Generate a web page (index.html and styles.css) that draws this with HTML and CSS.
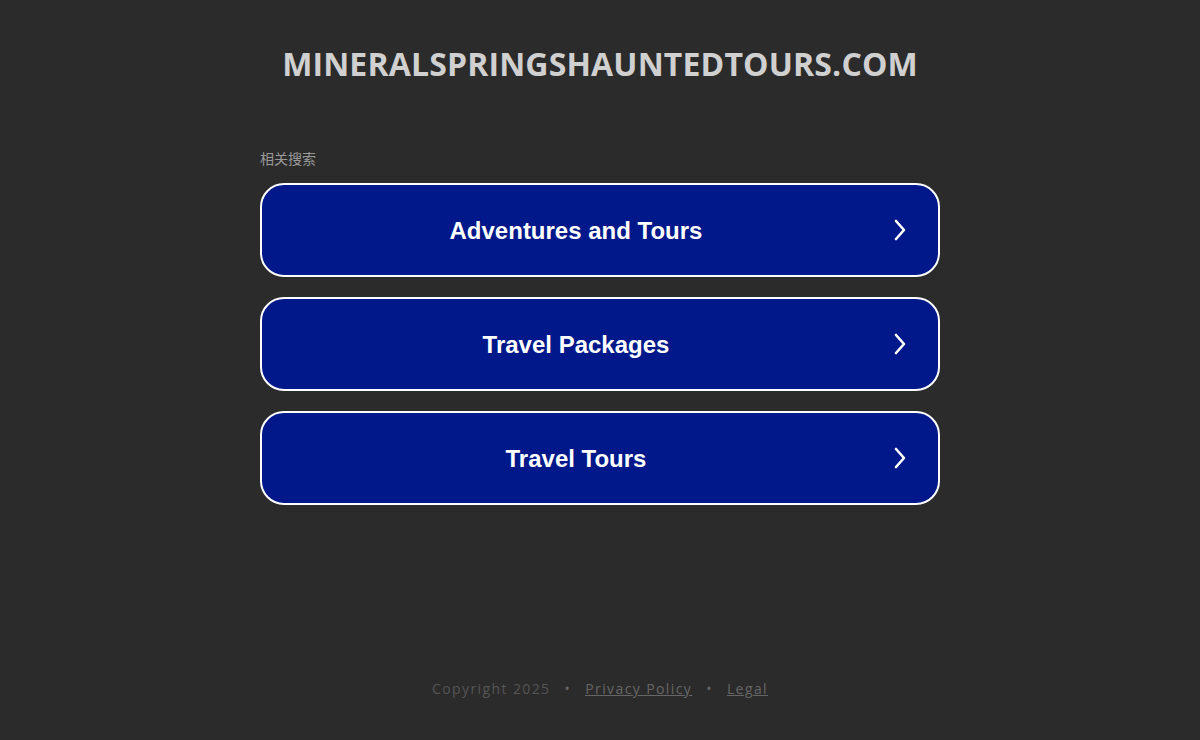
FILE: index.html
```html
<!DOCTYPE html>
<html lang="en">
<head>
<meta charset="utf-8">
<title>mineralspringshauntedtours.com</title>
<link rel="stylesheet" href="styles.css">
</head>
<body>
<div class="page">
  <header class="header">
    <h1 class="domain">MINERALSPRINGSHAUNTEDTOURS.COM</h1>
  </header>
  <main class="main">
    <div class="label">相关搜索</div>
    <div class="list">
      <a class="item" href="#"><span class="item-text">Adventures and Tours</span><svg class="chev" width="16" height="22" viewBox="0 0 16 22"><path d="M4 2 L12 11 L4 20" fill="none" stroke="#fff" stroke-width="2.6" stroke-linecap="round" stroke-linejoin="round"/></svg></a>
      <a class="item" href="#"><span class="item-text">Travel Packages</span><svg class="chev" width="16" height="22" viewBox="0 0 16 22"><path d="M4 2 L12 11 L4 20" fill="none" stroke="#fff" stroke-width="2.6" stroke-linecap="round" stroke-linejoin="round"/></svg></a>
      <a class="item" href="#"><span class="item-text">Travel Tours</span><svg class="chev" width="16" height="22" viewBox="0 0 16 22"><path d="M4 2 L12 11 L4 20" fill="none" stroke="#fff" stroke-width="2.6" stroke-linecap="round" stroke-linejoin="round"/></svg></a>
    </div>
  </main>
  <footer class="footer">
    <span>Copyright 2025</span>
    <span class="dot">•</span>
    <a href="#" class="flink">Privacy Policy</a>
    <span class="dot">•</span>
    <a href="#" class="flink">Legal</a>
  </footer>
</div>
</body>
</html>
```
FILE: styles.css
```css
html, body {
  margin: 0;
  padding: 0;
  background: #2b2b2b;
}
.page {
  width: 1200px;
  height: 740px;
  display: flex;
  flex-direction: column;
  align-items: center;
}
.header {
  padding-top: 43px;
}
.domain {
  margin: 0;
  font-family: "Open Sans", sans-serif;
  font-weight: 700;
  font-size: 32px;
  line-height: 42px;
  color: #d0d0d0;
  letter-spacing: 0.15px;
}
.main {
  width: 680px;
  margin-top: 64px;
}
.label {
  font-family: "Noto Sans CJK SC", sans-serif;
  font-size: 14px;
  line-height: 18px;
  color: #9a9a9a;
  margin-bottom: 16px;
}
.list {
  display: flex;
  flex-direction: column;
  gap: 20px;
}
.item {
  box-sizing: border-box;
  height: 94px;
  border: 2px solid #ffffff;
  border-radius: 24px;
  background: #00188a;
  display: flex;
  align-items: center;
  justify-content: center;
  position: relative;
  text-decoration: none;
}
.item-text {
  font-family: "Liberation Sans", Arial, sans-serif;
  font-weight: 700;
  font-size: 24px;
  color: #ffffff;
  margin-left: -48px;
  padding-top: 1px;
}
.chev {
  position: absolute;
  right: 30px;
  top: 34px;
}
.footer {
  margin-top: auto;
  margin-bottom: 42px;
  display: flex;
  gap: 14px;
  font-family: "Open Sans", sans-serif;
  font-size: 14px;
  letter-spacing: 1.4px;
  color: #555555;
}
.flink {
  color: #666666;
  text-decoration: underline;
}
.dot {
  color: #666666;
}
```
